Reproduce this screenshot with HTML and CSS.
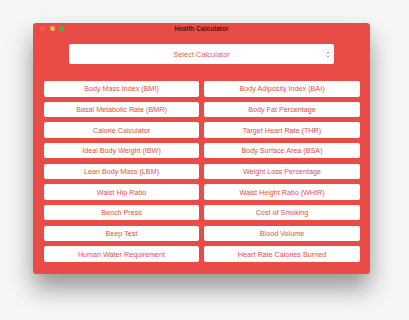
FILE: index.html
```html
<!DOCTYPE html>
<html lang="en">

<head>
    <meta charset="UTF-8">
    <title>Health Calculator</title>
    <link rel="stylesheet" href="styles.css">
</head>

<body>

    <div class="window">
        <div class="titlebar">
            <div class="lights">
                <span class="light close"></span>
                <span class="light min"></span>
                <span class="light max"></span>
            </div>
            <h1>Health Calculator</h1>
        </div>

        <div class="select">
            <span>Select Calculator</span>
            <svg class="chevron" width="4" height="7" viewBox="0 0 4 7">
                <path d="M0.5 2.5 L2 1 L3.5 2.5 M0.5 4.5 L2 6 L3.5 4.5" fill="none" stroke="#e3706b" stroke-width="0.8"/>
            </svg>
        </div>

        <section class="buttons">
            <button>Body Mass Index (BMI)</button>
            <button>Body Adiposity Index (BAI)</button>
            <button>Basal Metabolic Rate (BMR)</button>
            <button>Body Fat Percentage</button>
            <button>Calorie Calculator</button>
            <button>Target Heart Rate (THR)</button>
            <button>Ideal Body Weight (IBW)</button>
            <button>Body Surface Area (BSA)</button>
            <button>Lean Body Mass (LBM)</button>
            <button>Weight Loss Percentage</button>
            <button>Waist Hip Ratio</button>
            <button>Waist Height Ratio (WHtR)</button>
            <button>Bench Press</button>
            <button>Cost of Smoking</button>
            <button>Beep Test</button>
            <button>Blood Volume</button>
            <button>Human Water Requirement</button>
            <button>Heart Rate Calories Burned</button>
        </section>
    </div>

</body></html>
```

FILE: styles.css
```css
body {
    margin: 0;
    background-color: #f6f6f6;
    font-family: "Liberation Sans", Arial, sans-serif;
    padding-top: 23px;
    padding-left: 33px;
    height: 297px;
}

.window {
    width: 337px;
    height: 251px;
    background-color: #e94c46;
    border-radius: 3px;
    box-shadow: 0 14px 24px rgba(0, 0, 0, 0.4);
    box-sizing: border-box;
    padding: 0 10px;
}

.titlebar {
    position: relative;
    height: 21px;
    display: flex;
    align-items: center;
    justify-content: center;
}

.titlebar h1 {
    margin: 0;
    margin-top: -11px;
    font-size: 6.6px;
    font-weight: bold;
    color: #5e1212;
}

.lights {
    position: absolute;
    left: -3px;
    top: 2.5px;
    display: flex;
    gap: 4.5px;
}

.light {
    width: 5px;
    height: 5px;
    border-radius: 50%;
}

.close {
    background-color: #f05a55;
}

.min {
    background-color: #f6b146;
}

.max {
    background-color: #38b94a;
}

.select {
    position: relative;
    width: 265px;
    height: 20px;
    margin: 0 auto;
    background-color: white;
    border-radius: 2px;
    display: flex;
    align-items: center;
    justify-content: center;
    font-size: 7.5px;
    color: #e3605a;
}

.chevron {
    position: absolute;
    right: 4px;
    top: 6.5px;
}

.buttons {
    margin-top: 17px;
    display: grid;
    grid-template-columns: 155px 156px;
    column-gap: 5px;
    grid-auto-rows: 15.5px;
    row-gap: 5.17px;
    padding-left: 1px;
}

button {
    border: none;
    background-color: white;
    border-radius: 2px;
    font-family: "Liberation Sans", Arial, sans-serif;
    font-size: 7.2px;
    color: #e0524c;
    padding: 0;
}
```
